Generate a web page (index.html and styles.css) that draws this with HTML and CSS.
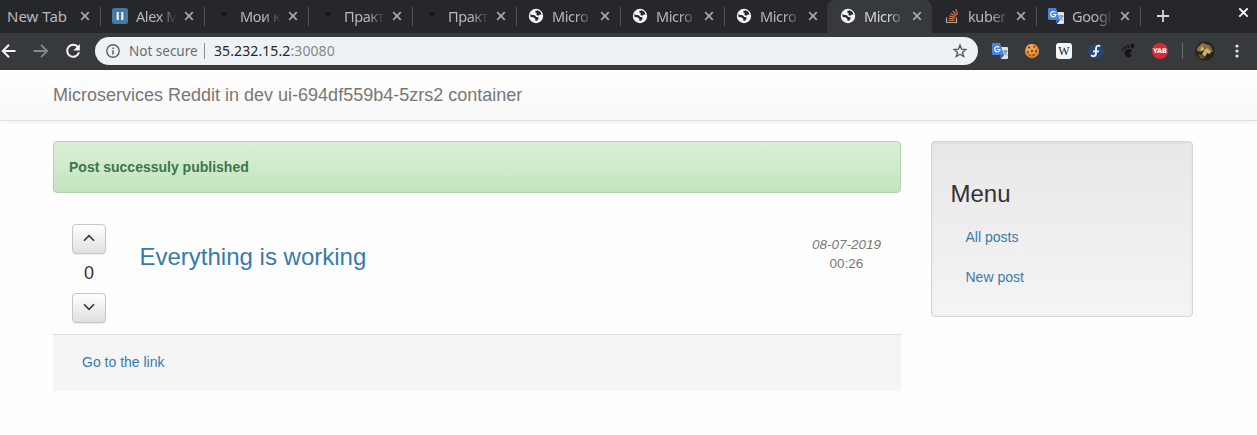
FILE: index.html
```html
<!DOCTYPE html>
<html lang="en">
<head>
<meta charset="utf-8">
<title>Microservices Reddit</title>
<link rel="stylesheet" href="styles.css">
</head>
<body>
<svg class="defs" width="0" height="0">
  <symbol id="x" viewBox="0 0 10 10"><path d="M1.2 1.2l7.6 7.6M8.8 1.2L1.2 8.8" stroke="currentColor" stroke-width="1.7" fill="none"/></symbol>
  <symbol id="globe" viewBox="0 0 16 16"><circle cx="8" cy="8" r="7.2" fill="#f4f5f6"/><path d="M2.2 6.2L4.5 7l2.2.2L8.2 9l2.3.3v1.6L8.6 13l-1.4-.6.2-1.5-2-1.6L2.6 9zM7.3 3.2l2.4-1 2.6 1.6 1.2 2.7-2 .2-1.4 1-1.8-.7.6-1.6-1.6-.8z" fill="#25272b"/></symbol>
  <symbol id="translate" viewBox="0 0 16 16"><path d="M7 4h8a1 1 0 0 1 1 1v10a1 1 0 0 1-1 1H9z" fill="#dfe4ec"/><path d="M0 1a1 1 0 0 1 1-1h7l4 12H1a1 1 0 0 1-1-1z" fill="#4a82dc"/><path d="M8 12h4l-3 4z" fill="#2f5fae"/><path d="M7.2 4.4A2.6 2.6 0 1 0 7.9 6.5H5.3" fill="none" stroke="#fff" stroke-width="1.2"/><path d="M11 8h4.5M13.2 7v1M14.5 8c-.4 2-1.5 3-3 4M12 9l3 3.4" fill="none" stroke="#65768e" stroke-width=".9"/></symbol>
  <symbol id="drop" viewBox="0 0 16 16"><path d="M4.5 4.5h7L8 10z" fill="#141518"/></symbol>
</svg>

<header class="browser">
  <div class="strip">
    <div class="tab"><span class="label wide">New Tab</span><svg class="close"><use href="#x"/></svg></div>
    <div class="tab"><svg class="icon" viewBox="0 0 16 16"><rect width="16" height="16" rx="2.5" fill="#4878a6"/><path d="M5.7 4v8M10.3 4v8" stroke="#fff" stroke-width="2"/></svg><span class="label">Alex M</span><svg class="close"><use href="#x"/></svg></div>
    <div class="tab"><svg class="icon"><use href="#drop"/></svg><span class="label">Мои к</span><svg class="close"><use href="#x"/></svg></div>
    <div class="tab"><svg class="icon"><use href="#drop"/></svg><span class="label">Практ</span><svg class="close"><use href="#x"/></svg></div>
    <div class="tab"><svg class="icon"><use href="#drop"/></svg><span class="label">Практ</span><svg class="close"><use href="#x"/></svg></div>
    <div class="tab"><svg class="icon"><use href="#globe"/></svg><span class="label">Micro</span><svg class="close"><use href="#x"/></svg></div>
    <div class="tab"><svg class="icon"><use href="#globe"/></svg><span class="label">Micro</span><svg class="close"><use href="#x"/></svg></div>
    <div class="tab plain"><svg class="icon"><use href="#globe"/></svg><span class="label">Micro</span><svg class="close"><use href="#x"/></svg></div>
    <div class="tab plain active"><svg class="icon"><use href="#globe"/></svg><span class="label">Micro</span><svg class="close"><use href="#x"/></svg></div>
    <div class="tab"><svg class="icon" viewBox="0 0 16 16" fill="none"><path d="M2.5 9.5v5h10v-5" stroke="#a9aaab" stroke-width="1.2"/><path d="M4.5 12.5h6M4.6 10.3l6 .5M5.2 7.8l5.8 1.6M6.6 5.2l5.1 3M8.8 2.8l3.8 4.6M11.8 1l1.9 5.6" stroke="#df703b" stroke-width="1.2"/></svg><span class="label">kuber</span><svg class="close"><use href="#x"/></svg></div>
    <div class="tab"><svg class="icon"><use href="#translate"/></svg><span class="label">Googl</span><svg class="close"><use href="#x"/></svg></div>
    <svg class="plus" viewBox="0 0 14 14"><path d="M7 1v12M1 7h12" stroke="#d4d6d8" stroke-width="1.8"/></svg>
    <svg class="window-close"><use href="#x"/></svg>
  </div>
  <div class="toolbar">
    <svg class="nav" viewBox="0 0 16 16"><path d="M15.5 8H2.5M9 1.8L2.8 8 9 14.2" fill="none" stroke="#f4f5f6" stroke-width="2"/></svg>
    <svg class="nav" viewBox="0 0 16 16"><path d="M1.5 8h13M9 1.8L15.2 8 9 14.2" fill="none" stroke="#85898c" stroke-width="1.8"/></svg>
    <svg class="nav" viewBox="0 0 16 16"><path d="M14 4.2A6 6 0 1 0 15 9.2" fill="none" stroke="#f4f5f6" stroke-width="2"/><path d="M15.8 1v6.4H9.4z" fill="#f4f5f6"/></svg>
    <div class="address">
      <svg class="info" viewBox="0 0 14 14"><circle cx="7" cy="7" r="6.2" fill="none" stroke="#5a5e62" stroke-width="1.4"/><path d="M7 6.2v4.2M7 3.5v1.5" stroke="#5a5e62" stroke-width="1.5"/></svg>
      <span class="secure">Not secure</span>
      <span class="url">35.232.15.2<span class="port">:30080</span></span>
      <svg class="star" viewBox="0 0 16 16"><path d="M8 2.2l1.6 4 4.2.3-3.2 2.8 1 4.1L8 11.2l-3.6 2.2 1-4.1-3.2-2.8 4.2-.3z" fill="none" stroke="#55595d" stroke-width="1.4"/></svg>
    </div>
    <div class="extensions">
      <svg class="icon"><use href="#translate"/></svg>
      <svg class="icon" viewBox="0 0 16 16"><circle cx="8" cy="8" r="7.2" fill="#e0862f"/><circle cx="7" cy="6" r="4.8" fill="#eda458"/><g fill="#7a3f22"><circle cx="5" cy="4.6" r="1.1"/><circle cx="10" cy="3.8" r="1"/><circle cx="8" cy="8" r="1.2"/><circle cx="12" cy="8.2" r="1.1"/><circle cx="4" cy="9.3" r="1"/><circle cx="9.5" cy="12" r="1.1"/><circle cx="6" cy="12.3" r=".8"/></g></svg>
      <span class="wiki">W</span>
      <svg class="icon" viewBox="0 0 16 16"><circle cx="8" cy="8" r="7.6" fill="#264777"/><path d="M12.2 3.2C9.8 1.8 8 3.2 8 5.6v4.6c0 3.5-3.8 3.8-4.7 1.6M5 8.4h6" fill="none" stroke="#f1f5fb" stroke-width="1.9"/></svg>
      <svg class="icon" viewBox="0 0 16 16" fill="#121416"><path d="M6 7c2-1.4 6-1.2 6 .7 0 1.7-3.1 1.6-2.5 3 .4 1 1.8.2 2.1 1-.2 2-2 3.4-4.2 2.5C4.8 13.2 3.2 9 6 7z"/><ellipse cx="12.4" cy="3" rx="1.8" ry="2.4"/><ellipse cx="8.2" cy="3.2" rx="1.2" ry="1.8"/><ellipse cx="5.2" cy="4.5" rx="1" ry="1.5"/><ellipse cx="2.9" cy="6.4" rx=".8" ry="1.3"/></svg>
      <span class="yab">YAB</span>
    </div>
    <svg class="avatar" viewBox="0 0 20 20"><circle cx="10" cy="10" r="9.7" fill="#27221a"/><path d="M2 7l5-5 4 1 5 3 2 5-5-1-4-4-3 5-4-1z" fill="#8a7148"/><path d="M7 5l3 3-2 2-3-1zM11 7l5 3-1 3-3-1-2 4-3-3 2-3z" fill="#d0b063"/><path d="M3 13l4 1 3 4-5-1z" fill="#75572a"/><path d="M12 3l4 2 1 4-3-3z" fill="#5f6842"/></svg>
    <svg class="more" viewBox="0 0 4 14" fill="#e3e5e6"><circle cx="2" cy="2" r="1.6"/><circle cx="2" cy="7" r="1.6"/><circle cx="2" cy="12" r="1.6"/></svg>
  </div>
</header>

<nav class="navbar">Microservices Reddit in dev ui-694df559b4-5zrs2 container</nav>
<div class="page">
  <main class="content">
    <div class="alert">Post successuly published</div>
    <article class="post">
      <div class="post-body">
        <div class="votes">
          <button class="vote"><svg viewBox="0 0 12 8"><path d="M1 6.7l5-5 5 5"/></svg></button>
          <span class="score">0</span>
          <button class="vote"><svg viewBox="0 0 12 8"><path d="M1 1.3l5 5 5-5"/></svg></button>
        </div>
        <h3 class="title"><a>Everything is working</a></h3>
        <div class="date"><em>08-07-2019</em><span>00:26</span></div>
      </div>
      <footer class="post-footer"><a>Go to the link</a></footer>
    </article>
  </main>
  <aside class="menu">
    <h3>Menu</h3>
    <a>All posts</a>
    <a>New post</a>
  </aside>
</div>
</body>
</html>
```
FILE: styles.css
```css
* { box-sizing: border-box; }
body {
  margin: 0;
  height: 435px;
  overflow: hidden;
  background: #fefefe;
  color: #333;
  font: 14px/20px "Liberation Sans", Arial, sans-serif;
}
svg { display: block; flex: none; }
.defs { position: absolute; }
.browser { font-family: "Noto Sans", sans-serif; }

.strip {
  display: flex;
  height: 33px;
  background: #25272b;
}
.tab {
  position: relative;
  display: flex;
  align-items: center;
  flex: none;
  width: 104px;
  height: 32px;
  padding-left: 12px;
}
.tab:first-child { width: 100px; padding-left: 7px; }
.tab::before {
  content: "";
  position: absolute;
  right: -1px;
  top: 7px;
  width: 1px;
  height: 19px;
  background: #56585c;
}
.tab.plain::before { display: none; }
.tab.active {
  height: 33px;
  padding-bottom: 1px;
  background: #363a3d;
  border-radius: 8px 8px 0 0;
  box-shadow: -1px 0 1px #363a3d;
}
.tab.active .label { color: #d5d7d9; }
.icon { width: 16px; height: 16px; }
.label {
  width: 41px;
  margin-left: 8px;
  white-space: nowrap;
  color: #b6b9bc;
  font-size: 14.5px;
  letter-spacing: -.4px;
  line-height: 24px;
  -webkit-mask-image: linear-gradient(90deg, #000 58%, transparent 100%);
  mask-image: linear-gradient(90deg, #000 58%, transparent 100%);
}
.label.wide {
  width: 65px;
  margin-left: 0;
  font-size: 15px;
  letter-spacing: 0;
  -webkit-mask-image: none;
  mask-image: none;
}
.close { width: 10px; height: 10px; margin-left: 7px; color: #a6a9ac; }
.label.wide + .close { margin-left: 8px; }
.plus { width: 14px; height: 14px; margin: 9px 0 0 16px; }
.window-close { width: 11px; height: 11px; margin: 7px 8px 0 auto; color: #fff; }

.toolbar {
  display: flex;
  align-items: center;
  height: 37px;
  padding-bottom: 1px;
  background: #363a3d;
}
.nav { width: 16px; height: 16px; margin-right: 16px; }
.nav:nth-child(3) { margin-right: 15px; }
.address {
  display: flex;
  align-items: center;
  width: 883px;
  height: 28px;
  padding: 0 10px 0 11px;
  border-radius: 14px;
  background: #eef2f4;
  font-size: 14px;
}
.info { width: 14px; height: 14px; }
.secure {
  width: 76px;
  height: 16px;
  margin-left: 9px;
  border-right: 1px solid #8d9194;
  color: #686c70;
  font-size: 13.5px;
  line-height: 16px;
  white-space: nowrap;
}
.url { margin-left: 9px; color: #242729; letter-spacing: .1px; }
.port { color: #84898c; }
.star { width: 16px; height: 16px; margin-left: auto; }
.extensions {
  display: flex;
  gap: 16px;
  margin-left: 14px;
  padding-right: 14px;
  border-right: 1px solid #696d70;
}
.wiki {
  width: 16px;
  height: 16px;
  border-radius: 3px;
  background: #f7f7f7;
  color: #222;
  font: 12px/16px "Liberation Serif", serif;
  text-align: center;
}
.yab {
  width: 16px;
  height: 16px;
  border-radius: 50%;
  background: #d52d35;
  color: #fff;
  font: bold 6.5px/16px "DejaVu Sans", sans-serif;
  text-align: center;
}
.avatar { width: 20px; height: 20px; margin-left: 12px; }
.more { width: 4px; height: 14px; margin-left: 20px; }

.navbar {
  height: 51px;
  padding: 15px 53px;
  border-bottom: 1px solid #e1e1e1;
  background: linear-gradient(#fff, #f8f8f8);
  box-shadow: 0 1px 4px rgba(0, 0, 0, .06);
  color: #777;
  font-size: 18px;
}
.page {
  display: grid;
  grid-template-columns: 848px 262px;
  gap: 30px;
  align-items: start;
  padding: 20px 53px;
}
.alert {
  height: 52px;
  padding: 15px;
  border: 1px solid #b2d5ab;
  border-radius: 4px;
  background: linear-gradient(#dceed8, #c3e5bd);
  color: #3c7649;
  font-weight: bold;
}
.post {
  margin-top: 21px;
  background: #fefefe;
  box-shadow: 0 0 2px rgba(0, 0, 0, .03);
}
.post-body {
  display: flex;
  height: 120px;
  padding: 10px 20px 0 19px;
}
.votes {
  display: flex;
  flex-direction: column;
  align-items: center;
  width: 34px;
}
.vote {
  display: flex;
  align-items: center;
  justify-content: center;
  width: 34px;
  height: 30px;
  padding: 0 0 3px;
  border: 1px solid #c6c6c6;
  border-radius: 4px;
  background: linear-gradient(#fff, #e0e0e0);
  box-shadow: 0 1px 1px rgba(0, 0, 0, .08);
}
.vote svg { width: 12px; height: 8px; fill: none; stroke: #333; stroke-width: 1.6; }
.score { height: 39px; font-size: 18px; line-height: 38px; }
a { color: #377bad; text-decoration: none; }
h3 { margin: 0; font-size: 24px; font-weight: 400; line-height: 26px; }
.title { margin: 20px 0 0 33.5px; }
.date {
  display: flex;
  flex-direction: column;
  align-items: center;
  margin: 11px 0 0 auto;
  color: #777;
  font-size: 13.5px;
  line-height: 19px;
}
.post-footer {
  height: 57px;
  padding: 17px 29px;
  border-top: 1px solid #ddd;
  background: #f5f5f5;
}
.menu {
  display: flex;
  flex-direction: column;
  height: 176px;
  padding: 39px 18.5px 0;
  border: 1px solid #d6d6d6;
  border-radius: 4px;
  background: linear-gradient(#e8e8e8, #f4f4f4);
  box-shadow: inset 0 1px 3px rgba(0, 0, 0, .06);
}
.menu a { padding: 10px 15px; }
.menu h3 { margin-bottom: 10px; }
```
